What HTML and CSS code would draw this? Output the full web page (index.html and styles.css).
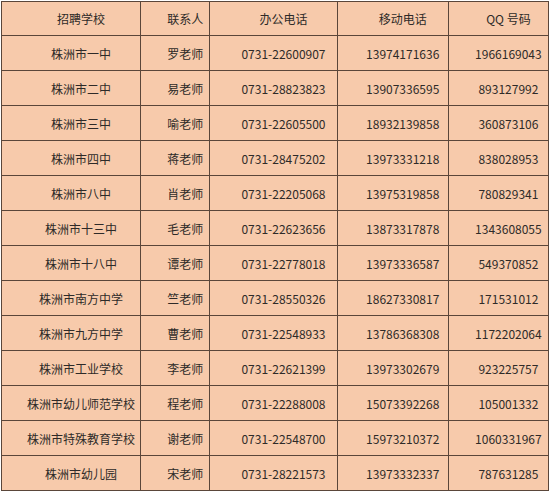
FILE: index.html
```html
<!DOCTYPE html>
<html lang="zh-CN">
<head>
<meta charset="utf-8">
<link rel="stylesheet" href="styles.css">
</head>
<body>
<div class="wrap">
<table class="grid">
<colgroup>
<col class="c1"><col class="c2"><col class="c3"><col class="c4"><col class="c5">
</colgroup>
<tbody>
<tr class="head"><td>招聘学校</td><td>联系人</td><td>办公电话</td><td>移动电话</td><td>QQ 号码</td></tr>
<tr><td>株洲市一中</td><td>罗老师</td><td>0731-22600907</td><td>13974171636</td><td>1966169043</td></tr>
<tr><td>株洲市二中</td><td>易老师</td><td>0731-28823823</td><td>13907336595</td><td>893127992</td></tr>
<tr><td>株洲市三中</td><td>喻老师</td><td>0731-22605500</td><td>18932139858</td><td>360873106</td></tr>
<tr><td>株洲市四中</td><td>蒋老师</td><td>0731-28475202</td><td>13973331218</td><td>838028953</td></tr>
<tr><td>株洲市八中</td><td>肖老师</td><td>0731-22205068</td><td>13975319858</td><td>780829341</td></tr>
<tr><td>株洲市十三中</td><td>毛老师</td><td>0731-22623656</td><td>13873317878</td><td>1343608055</td></tr>
<tr><td>株洲市十八中</td><td>谭老师</td><td>0731-22778018</td><td>13973336587</td><td>549370852</td></tr>
<tr><td>株洲市南方中学</td><td>竺老师</td><td>0731-28550326</td><td>18627330817</td><td>171531012</td></tr>
<tr><td>株洲市九方中学</td><td>曹老师</td><td>0731-22548933</td><td>13786368308</td><td>1172202064</td></tr>
<tr><td>株洲市工业学校</td><td>李老师</td><td>0731-22621399</td><td>13973302679</td><td>923225757</td></tr>
<tr><td>株洲市幼儿师范学校</td><td>程老师</td><td>0731-22288008</td><td>15073392268</td><td>105001332</td></tr>
<tr><td>株洲市特殊教育学校</td><td>谢老师</td><td>0731-22548700</td><td>15973210372</td><td>1060331967</td></tr>
<tr><td>株洲市幼儿园</td><td>宋老师</td><td>0731-28221573</td><td>13973332337</td><td>787631285</td></tr>
</tbody>
</table>
</div>
</body>
</html>
```
FILE: styles.css
```css
html, body {
  margin: 0;
  padding: 0;
  background: #ffffff;
}
.wrap {
  padding: 1px 0 0 1px;
}
.grid {
  border-collapse: collapse;
  table-layout: fixed;
  width: 548px;
  background: #f7caab;
  font-family: "Noto Sans CJK SC", "Noto Sans", sans-serif;
  font-size: 12px;
  color: #2e2a28;
}
.grid td {
  border: 1px solid #5a463a;
  height: 34px;
  padding: 0 0 0 20px;
  text-align: center;
  vertical-align: middle;
  white-space: nowrap;
  overflow: hidden;
}
.grid .head td {
  height: 33px;
}
.c1 { width: 139px; }
.c2 { width: 69px; }
.c3 { width: 127px; }
.c4 { width: 111px; }
.c5 { width: 100px; }
```
